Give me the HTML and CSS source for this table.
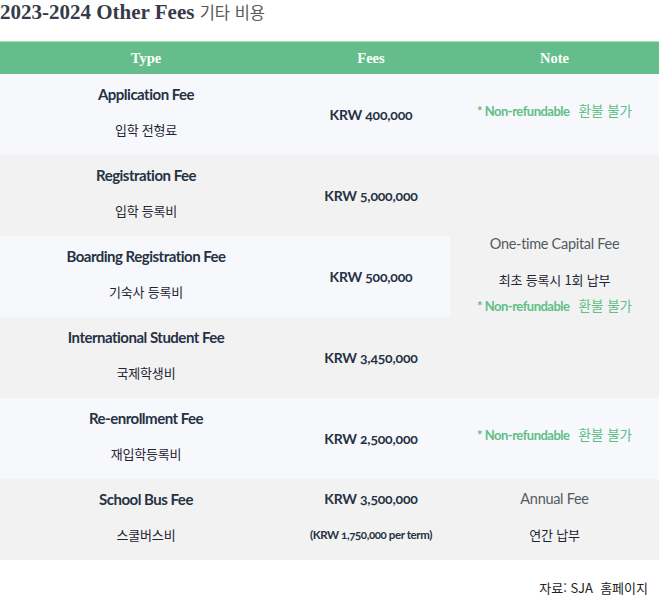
FILE: index.html
```html
<!DOCTYPE html>
<html lang="ko">
<head>
<meta charset="utf-8">
<title>2023-2024 Other Fees</title>
<link rel="stylesheet" href="styles.css">
</head>
<body>
<div class="page">
  <h2 class="title">2023-2024 Other Fees <span class="title-ko">기타 비용</span></h2>
  <table class="fees">
    <thead>
      <tr>
        <th class="c-type">Type</th>
        <th class="c-fee">Fees</th>
        <th class="c-note">Note</th>
      </tr>
    </thead>
    <tbody>
      <tr class="light">
        <td><div class="stack"><span class="name">Application Fee</span><span class="ko">입학 전형료</span></div></td>
        <td class="amount">KRW 400,000</td>
        <td><div class="nr-line single"><span class="nr">* Non-refundable</span><span class="nr-ko">환불 불가</span></div></td>
      </tr>
      <tr class="gray">
        <td><div class="stack"><span class="name">Registration Fee</span><span class="ko">입학 등록비</span></div></td>
        <td class="amount">KRW 5,000,000</td>
        <td rowspan="3" class="note-merged">
          <div class="note-stack">
            <span class="plain">One-time Capital Fee</span>
            <span class="ko">최초 등록시 1회 납부</span>
            <span class="nr-line"><span class="nr">* Non-refundable</span><span class="nr-ko">환불 불가</span></span>
          </div>
        </td>
      </tr>
      <tr class="light">
        <td><div class="stack"><span class="name">Boarding Registration Fee</span><span class="ko">기숙사 등록비</span></div></td>
        <td class="amount">KRW 500,000</td>
      </tr>
      <tr class="gray">
        <td><div class="stack"><span class="name">International Student Fee</span><span class="ko">국제학생비</span></div></td>
        <td class="amount">KRW 3,450,000</td>
      </tr>
      <tr class="light">
        <td><div class="stack"><span class="name">Re-enrollment Fee</span><span class="ko">재입학등록비</span></div></td>
        <td class="amount">KRW 2,500,000</td>
        <td><div class="nr-line single"><span class="nr">* Non-refundable</span><span class="nr-ko">환불 불가</span></div></td>
      </tr>
      <tr class="gray">
        <td><div class="stack"><span class="name">School Bus Fee</span><span class="ko">스쿨버스비</span></div></td>
        <td><div class="stack"><span class="amount">KRW 3,500,000</span><span class="term">(KRW 1,750,000 per term)</span></div></td>
        <td><div class="stack"><span class="plain">Annual Fee</span><span class="ko">연간 납부</span></div></td>
      </tr>
    </tbody>
  </table>
  <p class="source">자료: SJA&nbsp; 홈페이지</p>
</div>
</body>
</html>
```

FILE: styles.css
```css
html, body {
  margin: 0;
  padding: 0;
  background: #ffffff;
}

.page {
  width: 659px;
}

.title {
  margin: 0;
  padding: 0;
  height: 41px;
  box-sizing: border-box;
  font-family: "Liberation Serif", "DejaVu Serif", serif;
  font-weight: bold;
  font-size: 21px;
  line-height: 24px;
  color: #363b4a;
}

.title-ko {
  font-family: "Noto Sans CJK KR", sans-serif;
  font-weight: normal;
  font-size: 16.5px;
  color: #5a5a5a;
}

.fees {
  width: 659px;
  border-collapse: collapse;
  border-spacing: 0;
  table-layout: fixed;
  font-family: Lato, "Noto Sans CJK KR", sans-serif;
  color: #263244;
}

.fees thead tr {
  background: #65bd8c;
  border-top: 1px solid #a8dcbd;
}

.fees th {
  height: 32px;
  padding: 0;
  font-family: "Liberation Serif", serif;
  font-weight: bold;
  font-size: 14.5px;
  color: #ffffff;
  text-align: center;
  vertical-align: middle;
}

.c-type { width: 292px; }
.c-fee { width: 158px; }
.c-note { width: 209px; }

.fees td {
  height: 81px;
  padding: 0;
  text-align: center;
  vertical-align: middle;
}

tr.light { background: #f7f8fc; }
tr.gray { background: #f2f2f2; }

td.note-merged { background: #f2f2f2; }

.stack {
  display: flex;
  flex-direction: column;
  align-items: center;
  gap: 16px;
  line-height: 20px;
  padding-bottom: 5px;
}

.name {
  font-weight: bold;
  font-size: 15px;
  letter-spacing: -0.5px;
}

.ko {
  font-family: "Noto Sans CJK KR", sans-serif;
  font-size: 13px;
  color: #1f2633;
  letter-spacing: -0.2px;
}

.amount {
  font-weight: bold;
  font-size: 14px;
  letter-spacing: -0.2px;
  font-variant-numeric: oldstyle-nums;
}

.term {
  font-weight: bold;
  font-size: 11.5px;
  letter-spacing: -0.4px;
  font-variant-numeric: oldstyle-nums;
}

.plain {
  font-size: 14.5px;
  color: #555a60;
  letter-spacing: -0.3px;
}

.nr-line.single {
  padding-bottom: 9px;
  line-height: 20px;
}

.nr {
  font-weight: bold;
  font-size: 13px;
  color: #60be87;
  letter-spacing: -0.5px;
  margin-right: 9px;
}

.nr-ko {
  font-family: "Noto Sans CJK KR", sans-serif;
  font-size: 13.5px;
  color: #60be87;
}

.note-stack {
  display: flex;
  flex-direction: column;
  align-items: center;
  line-height: 20px;
  padding-bottom: 3px;
}

.note-stack .ko {
  margin-top: 16px;
}

.note-stack .nr-line {
  margin-top: 5px;
}

.source {
  margin: 0;
  padding: 18px 11px 0 0;
  text-align: right;
  font-family: "Noto Sans CJK KR", sans-serif;
  font-size: 13px;
  line-height: 20px;
  color: #222222;
}
```
